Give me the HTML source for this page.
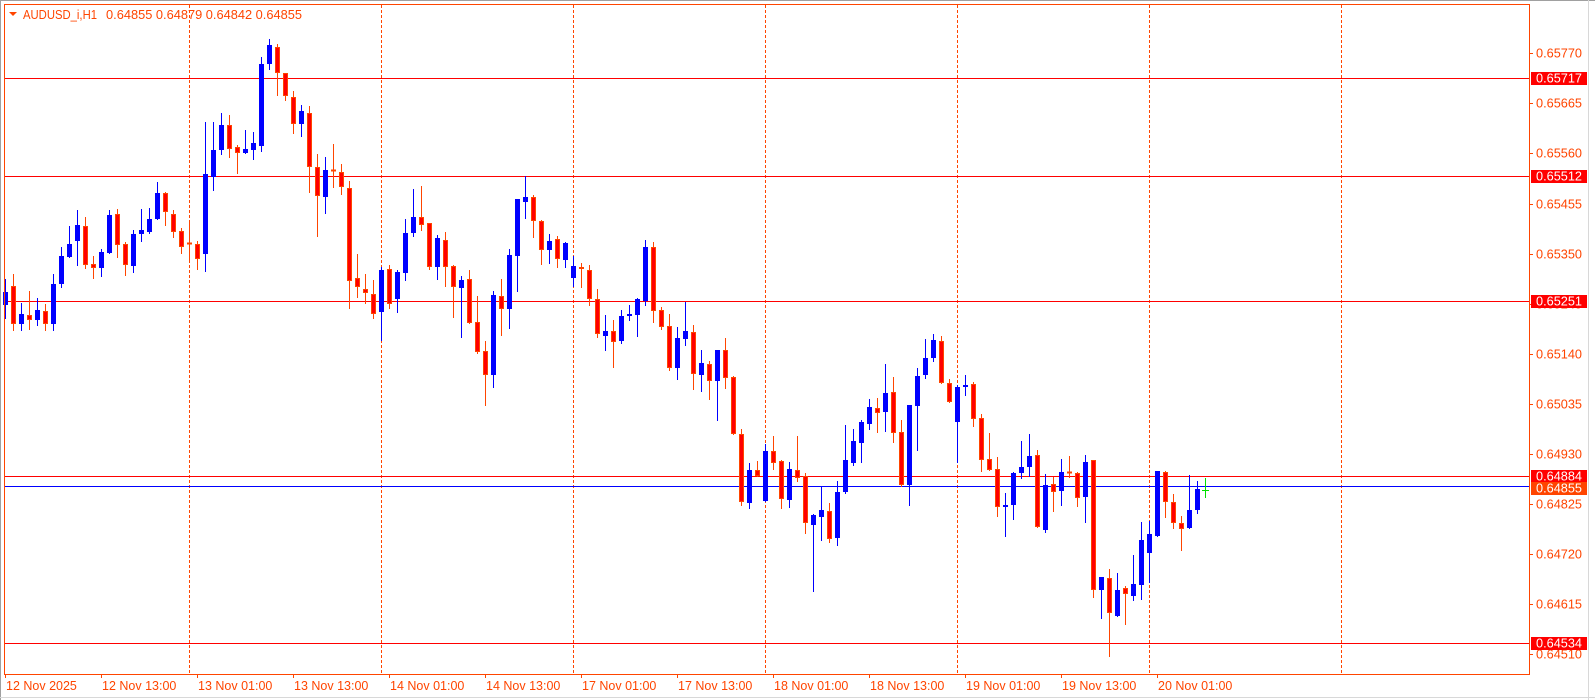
<!DOCTYPE html>
<html><head><meta charset="utf-8"><style>
html,body{margin:0;padding:0;background:#fff;}
svg{display:block;font-family:"Liberation Sans",sans-serif;}
</style></head><body>
<svg id="s" width="1595" height="700" viewBox="0 0 1595 700" xmlns="http://www.w3.org/2000/svg">
<rect x="0" y="0" width="1595" height="700" fill="#fff"/>
<line x1="0.5" y1="0" x2="0.5" y2="700" stroke="#a0a0a0"/>
<line x1="0" y1="0.5" x2="1595" y2="0.5" stroke="#a0a0a0"/>
<line x1="1588.5" y1="0" x2="1588.5" y2="700" stroke="#d8d8d8"/>
<line x1="0" y1="697.5" x2="1595" y2="697.5" stroke="#d8d8d8"/>
<g id="grid" stroke="#ff4500" stroke-dasharray="3,2"></g>
<g stroke="#ff0000">
<line x1="4" y1="78.5" x2="1529" y2="78.5"/>
<line x1="4" y1="176.5" x2="1529" y2="176.5"/>
<line x1="4" y1="301.5" x2="1529" y2="301.5"/>
<line x1="4" y1="476.5" x2="1529" y2="476.5"/>
<line x1="4" y1="643.5" x2="1529" y2="643.5"/>
</g>
<line x1="4" y1="486.5" x2="1529" y2="486.5" stroke="#0000ff"/>
<g id="c"></g>
<rect x="4.5" y="4.5" width="1525" height="670" fill="none" stroke="#ff4500"/>
<g id="ax" fill="#ff4500" font-size="12.5"></g>
<polygon points="9,12 17,12 13,16" fill="#ff4500"/>
<text x="23" y="19" fill="#ff4500" font-size="12.5" textLength="74" lengthAdjust="spacingAndGlyphs">AUDUSD_i,H1</text>
<text x="106" y="19" fill="#ff4500" font-size="12.5" textLength="196" lengthAdjust="spacingAndGlyphs">0.64855 0.64879 0.64842 0.64855</text>
</svg>
<script>
var NS="http://www.w3.org/2000/svg";
function el(p,t,a,txt){var e=document.createElementNS(NS,t);for(var k in a)e.setAttribute(k,a[k]);if(txt)e.textContent=txt;p.appendChild(e);return e;}
var g=document.getElementById('grid');
for(var k=0;k<7;k++){var x=189+192*k+0.5;el(g,'line',{x1:x,y1:5,x2:x,y2:674});}
var D="b279,292,305,318;r274,286,324,330;b303,314,324,330;r291,315,320,329;b298,310,320,325;r304,311,324,330;b274,284,324,330;b247,256,284,287;b226,244,257,257;b210,225,241,265;r217,226,265,268;r256,264,268,278;b249,252,268,276;b210,215,253,253;r209,214,245,257;r242,244,265,275;b230,234,266,272;b209,230,234,241;b208,219,232,233;b182,193,219,219;r192,193,212,225;r210,214,232,237;r228,231,247,253;r220,243,243,259;r241,244,259,269;b122,174,254,271;b122,150,177,190;b113,125,150,154;r115,125,149,157;r145,147,153,173;b130,149,153,153;b132,143,150,159;b57,64,146,151;b39,45,64,69;r44,47,73,95;r73,73,96,100;r91,97,124,133;b105,111,124,136;r106,113,167,192;r154,167,196,236;b157,170,197,213;r144,170,170,187;r164,172,187,194;r181,188,281,308;r254,278,287,297;r274,289,293,303;r280,294,314,318;b267,270,312,340;r265,269,304,308;b270,272,299,312;"+
"b219,233,273,280;b189,217,233,236;r186,217,225,230;r223,223,267,269;b235,238,267,279;r232,240,267,286;r265,266,287,317;b276,280,288,337;r270,279,323,323;r296,322,352,353;r341,351,375,405;b291,295,375,387;r279,296,309,335;b249,255,309,328;b199,199,256,291;b176,197,202,218;r195,197,221,237;r220,221,250,264;b234,241,250,263;r236,239,259,267;b242,243,260,267;b256,266,278,286;r263,267,269,287;r265,270,299,305;r289,299,334,337;"+
"b315,331,336,350;r320,331,342,367;b310,316,341,343;b305,314,316,320;b298,299,315,336;b240,247,301,305;r242,247,311,322;r307,310,327,329;r314,326,368,370;b327,338,368,379;b302,331,339,345;r325,332,374,389;b350,363,375,391;r361,364,381,399;b350,350,381,420;r338,350,378,388;r376,377,434,434;r429,434,502,505;b463,470,503,508;r461,470,476,476;b444,451,501,501;r436,451,463,469;r460,461,499,508;b462,469,500,507;r436,470,478,481;"+
"r473,476,523,533;b514,515,525,591;b486,510,517,540;r503,511,539,542;b481,492,538,545;b425,460,492,493;b429,441,463,465;b420,422,443,462;b399,407,424,429;r398,408,413,432;b364,393,412,431;r377,392,433,442;r420,432,485,486;b405,405,485,505;b368,376,406,450;b339,358,375,378;b334,340,358,361;r336,341,383,383;r379,383,402,402;b385,387,422,462;b375,385,387,395;r382,384,419,426;r414,418,460,471;r433,459,470,470;r457,469,507,516;"+
"b493,505,507,536;b472,473,505,519;b441,467,473,478;b434,456,467,476;r450,455,527,527;b474,485,530,532;r477,484,492,511;b459,472,491,505;r456,472,472,477;r472,473,498,506;b455,462,497,522;r460,460,590,597;b577,577,590,618;r569,578,613,656;b573,590,616,616;r586,588,594,624;b555,584,596,600;b522,540,585,599;b521,534,553,582;b471,471,536,536;r471,472,502,517;r494,502,523,528;r516,523,529,550;b475,510,528,528;b481,489,510,513;g478,490,490,497";
var c=document.getElementById('c');
D.split(';').forEach(function(s,i){
 var t=s[0],v=s.slice(1).split(',').map(Number);
 var x=5+8*i, cx=x+0.5;
 var wc=t=='b'?'#0000ff':(t=='g'?'#00e000':'#ff4500');
 el(c,'line',{x1:cx,y1:v[0],x2:cx,y2:v[3]+1,stroke:wc});
 if(t=='g'){el(c,'line',{x1:x-3,y1:v[1]+0.5,x2:x+4,y2:v[1]+0.5,stroke:wc});return;}
 var h=v[2]-v[1];
 if(h<2){el(c,'line',{x1:x-2,y1:v[1]+0.5,x2:x+3,y2:v[1]+0.5,stroke:wc,'stroke-width':2});return;}
 if(t=='b')el(c,'rect',{x:x-2,y:v[1],width:5,height:h,fill:'#0000ff'});
 else el(c,'rect',{x:x-1.5,y:v[1]+0.5,width:4,height:h-1,fill:'#ff0000',stroke:'#ff4500'});
});
var ax=document.getElementById('ax');
var tk=[["0.65770",53],["0.65665",103],["0.65560",153],["0.65455",204],["0.65350",254],["0.65245",304],["0.65140",354],["0.65035",404],["0.64930",454],["0.64825",504],["0.64720",554],["0.64615",604],["0.64510",654]];
tk.forEach(function(a){el(ax,'line',{x1:1529,y1:a[1]+0.5,x2:1533,y2:a[1]+0.5,stroke:'#ff4500'});el(ax,'text',{x:1536,y:a[1]+4.5,textLength:46,lengthAdjust:'spacingAndGlyphs'},a[0]);});
var lb=[["0.65717",78,"#ff0000"],["0.65512",176,"#ff0000"],["0.65251",301,"#ff0000"],["0.64884",476,"#ff0000"],["0.64855",488,"#ff4500"],["0.64534",643,"#ff0000"]];
lb.forEach(function(a){el(ax,'rect',{x:1531,y:a[1]-6,width:56,height:13,fill:a[2]});el(ax,'text',{x:1536,y:a[1]+4.5,fill:'#fff',textLength:46,lengthAdjust:'spacingAndGlyphs'},a[0]);});
var ds=["12 Nov 2025","12 Nov 13:00","13 Nov 01:00","13 Nov 13:00","14 Nov 01:00","14 Nov 13:00","17 Nov 01:00","17 Nov 13:00","18 Nov 01:00","18 Nov 13:00","19 Nov 01:00","19 Nov 13:00","20 Nov 01:00"];
ds.forEach(function(d,k){var x=5+96*k;el(ax,'line',{x1:x+0.5,y1:674,x2:x+0.5,y2:678,stroke:'#ff4500'});el(ax,'text',{x:x+1,y:690},d);});
</script>
</body></html>
